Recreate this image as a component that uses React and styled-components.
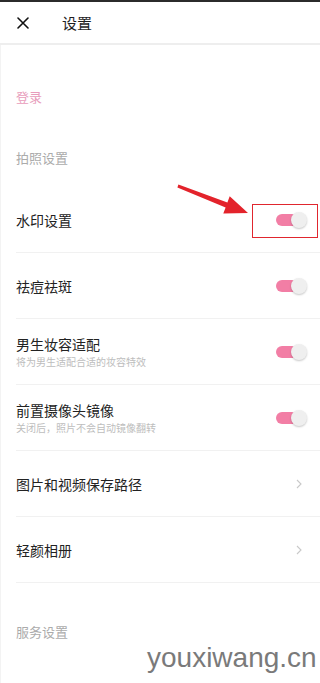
import React from "react";
import styled, { createGlobalStyle } from "styled-components";

const Global = createGlobalStyle`
  html, body { margin: 0; padding: 0; background: #fff; }
  body { font-family: "Noto Sans CJK SC", "Noto Sans", sans-serif; -webkit-font-smoothing: antialiased; }
  * { box-sizing: border-box; }
`;

const Page = styled.div`
  position: relative;
  width: 320px;
  height: 683px;
  overflow: hidden;
  background: #fff;
  border-top: 2px solid #2b2b2b;
`;

const Header = styled.header`
  display: flex;
  align-items: center;
  height: 43px;
  padding-left: 16px;
  border-bottom: 2px solid #eeeeee;
`;

const CloseBtn = styled.div`
  display: flex;
  align-items: center;
  justify-content: center;
  width: 14px;
  height: 14px;
  margin-right: 32px;
`;

const Title = styled.h1`
  margin: 0;
  font-size: 15px;
  font-weight: 400;
  color: #1e1e1e;
  line-height: 20px;
`;

const Content = styled.div`
  display: flex;
  flex-direction: column;
  border-left: 1px solid #f3f3f3;
`;

const LoginRow = styled.div`
  padding: 42px 16px 21px 15px;
  font-size: 13px;
  line-height: 20px;
  color: #e89cbb;
`;

const SectionTitle = styled.div`
  padding: ${(p) => p.$pad || "20px 15px 19px"};
  font-size: 13px;
  line-height: 20px;
  color: #ababab;
`;

const Row = styled.div`
  position: relative;
  display: flex;
  align-items: center;
  justify-content: space-between;
  height: 66px;
  margin-left: 15px;
  padding-right: 13px;
  border-bottom: 1px solid #f1f1f1;
`;

const TextBlock = styled.div`
  display: flex;
  flex-direction: column;
  gap: 2px;
`;

const ItemTitle = styled.div`
  font-size: 14px;
  line-height: 18px;
  color: #222;
`;

const ItemSub = styled.div`
  font-size: 10px;
  line-height: 14px;
  color: #bdbdbd;
`;

const Switch = styled.div`
  position: relative;
  width: 31px;
  height: 16px;
  flex: none;
  &::before {
    content: "";
    position: absolute;
    left: 0;
    top: 2px;
    width: 24px;
    height: 12px;
    border-radius: 6px;
    background: #f27ea5;
  }
  &::after {
    content: "";
    position: absolute;
    right: 0;
    top: 0;
    width: 16px;
    height: 16px;
    border-radius: 50%;
    background: #efefef;
    box-shadow: 0 1px 2px rgba(0, 0, 0, 0.22);
  }
`;

const Chevron = styled.svg`
  width: 6px;
  height: 10px;
  margin-right: 5px;
  flex: none;
`;

const Highlight = styled.div`
  position: absolute;
  right: 2px;
  top: 17px;
  width: 66px;
  height: 34px;
  border: 1.5px solid #e0262e;
  pointer-events: none;
`;

const Arrow = styled.svg`
  position: absolute;
  left: 176px;
  top: 182px;
  width: 76px;
  height: 34px;
  pointer-events: none;
`;

const Watermark = styled.div`
  position: absolute;
  left: 147px;
  top: 639px;
  font-family: "Liberation Sans", Arial, sans-serif;
  font-size: 28px;
  line-height: 34px;
  color: #7a7a7a;
  pointer-events: none;
`;

const Toggle = () => <Switch />;

const Arr = () => (
  <Chevron viewBox="0 0 6 10">
    <path d="M1 1 L5 5 L1 9" fill="none" stroke="#c9c9c9" strokeWidth="1.1" />
  </Chevron>
);

export default function App() {
  return (
    <>
      <Global />
      <Page>
        <Header>
          <CloseBtn>
            <svg width="12" height="12" viewBox="0 0 12 12">
              <path d="M1 1 L11 11 M11 1 L1 11" stroke="#111" strokeWidth="1.6" strokeLinecap="round" />
            </svg>
          </CloseBtn>
          <Title>设置</Title>
        </Header>
        <Content>
          <LoginRow>登录</LoginRow>
          <SectionTitle>拍照设置</SectionTitle>
          <Row>
            <TextBlock>
              <ItemTitle>水印设置</ItemTitle>
            </TextBlock>
            <Toggle />
            <Highlight />
          </Row>
          <Row>
            <TextBlock>
              <ItemTitle>祛痘祛斑</ItemTitle>
            </TextBlock>
            <Toggle />
          </Row>
          <Row>
            <TextBlock>
              <ItemTitle>男生妆容适配</ItemTitle>
              <ItemSub>将为男生适配合适的妆容特效</ItemSub>
            </TextBlock>
            <Toggle />
          </Row>
          <Row>
            <TextBlock>
              <ItemTitle>前置摄像头镜像</ItemTitle>
              <ItemSub>关闭后，照片不会自动镜像翻转</ItemSub>
            </TextBlock>
            <Toggle />
          </Row>
          <Row>
            <ItemTitle>图片和视频保存路径</ItemTitle>
            <Arr />
          </Row>
          <Row>
            <ItemTitle>轻颜相册</ItemTitle>
            <Arr />
          </Row>
          <SectionTitle $pad="39px 15px 27px">服务设置</SectionTitle>
          <Row>
            <ItemTitle>意见反馈与举报</ItemTitle>
            <Arr />
          </Row>
        </Content>
        <Arrow viewBox="0 0 76 34">
          <path d="M2.4 0.6 L51.4 18.4 L53.7 12.3 L72 29 L47.3 29.6 L49.6 23.4 L1.4 3.4 Z" fill="#e3232b" />
        </Arrow>
        <Watermark>youxiwang.cn</Watermark>
      </Page>
    </>
  );
}
